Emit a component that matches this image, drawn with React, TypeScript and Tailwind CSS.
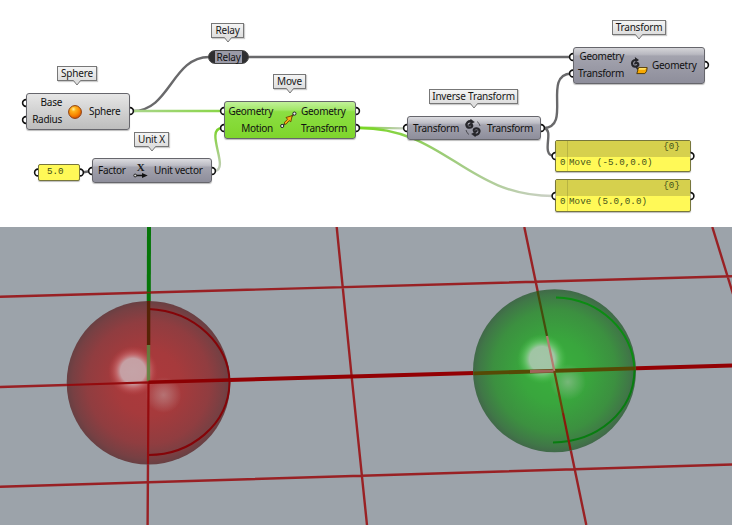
import React from "react";

const FONT = "font-['Noto_Sans','Open_Sans',sans-serif]";

function Tag({ className, children }: { className: string; children: React.ReactNode }) {
  return (
    <div className={`absolute flex h-[15px] items-center justify-center border border-[#777] bg-linear-to-b from-[#f4f4f4] to-[#dedede] text-[10px] tracking-[-0.2px] whitespace-nowrap text-[#161616] shadow-[1px_1px_1px_#0003] ${className}`}>
      <span>{children}</span>
      <svg className="absolute top-[13px] left-1/2 -ml-[5px] h-[6px] w-[10px]" viewBox="0 0 10 6">
        <path d="M1 0 L5 5 L9 0" fill="#dedede" stroke="#777" />
        <path d="M1.7 0H8.3" stroke="#dedede" strokeWidth="1.4" />
      </svg>
    </div>
  );
}

const BOX = "absolute flex items-center rounded-[3px] border border-[#66666c] text-[10px] tracking-[-0.28px] leading-[17px] text-[#111] whitespace-nowrap shadow-[0_1px_1px_#0004]";
const GREY = "bg-[linear-gradient(#dcdce0_0%,#bcbcc4_28%,#a3a3ae_36%,#8e8e9b_100%)]";

function Arrow() {
  return (
    <svg viewBox="0 0 17 18" className="h-[18px] w-[17px]">
      <path d="M2.5 15 L14 3" stroke="#333" strokeWidth="1.2" />
      <path d="M4 11.8 L7.6 8.3 L6 6.5 L12.2 4.6 L10.8 10.8 L9.2 9.6 L5.8 13.4Z" fill="#ffac13" stroke="#6c3c00" strokeWidth=".9" />
      <circle cx="2.2" cy="15" r="1.6" fill="#eee" stroke="#222" />
      <circle cx="14.4" cy="2.6" r="1.6" fill="#eee" stroke="#222" />
    </svg>
  );
}

function Swirl() {
  return (
    <svg viewBox="0 0 18 18" className="h-[18px] w-[18px]" fill="none" stroke="#26262b">
      <path d="M7.5 2.4 C4.2 1.6 1.9 4 2.6 6.6 C3.4 9.6 8.4 9.2 8.2 6.6 C8 4.9 5.4 5.2 5.2 6.8" strokeWidth="2.3" />
      <path d="M6.6 .2 L10.4 3 L6.6 5.2Z" fill="#26262b" strokeWidth=".5" />
      <path d="M10.5 15.6 C13.8 16.4 16.1 14 15.4 11.4 C14.6 8.4 9.6 8.8 9.8 11.4 C10 13.1 12.6 12.8 12.8 11.2" strokeWidth="2.3" />
      <path d="M11.4 17.8 L7.6 15 L11.4 12.8Z" fill="#26262b" strokeWidth=".5" />
      <path d="M2 11 Q2.5 14 5 15.5 M16 7 Q15.5 4 13 2.5" strokeWidth=".7" />
    </svg>
  );
}

function TransformIcon() {
  return (
    <svg viewBox="0 0 18 18" className="h-[18px] w-[18px]">
      <path d="M6 2.8 C2.5 3 1.4 5.5 2.4 8 C3.6 10.8 8.8 9.6 8.3 7 C7.8 5.2 5 5.6 5.2 7.4" fill="none" stroke="#26262b" strokeWidth="2.2" />
      <path d="M4.8 0 L9 3 L5.5 5.4Z" fill="#26262b" />
      <path d="M6 9.5 L8 12.5" stroke="#26262b" strokeWidth="1.5" />
      <path d="M6.8 16.6 L8.6 10.6 H17.2 L16.6 14.2 L14.8 16.6Z" fill="#f7a800" stroke="#4a3300" strokeWidth=".9" />
      <path d="M8.3 12.8 L9.3 11.1 H16.4 L15 12.8Z" fill="#ffe066" />
    </svg>
  );
}

function UnitIcon() {
  return (
    <svg viewBox="0 0 15 18" className="h-[18px] w-[15px]">
      <text x="7.5" y="8.5" textAnchor="middle" className="font-['Liberation_Serif',serif] text-[11px] font-bold" fill="#1c1c20">X</text>
      <path d="M3 13.5H11" stroke="#111" strokeWidth="1.5" />
      <path d="M9 11 L14.7 13.5 L9 16Z" fill="#111" />
      <circle cx="2.2" cy="13.5" r="1.4" fill="#ddd" stroke="#222" />
    </svg>
  );
}

function Panel({ className, row, value }: { className: string; row: string; value: string }) {
  return (
    <div className={`absolute flex w-[136px] flex-col overflow-hidden rounded-[2px] border border-[#77763c] bg-[#fff957] font-['Liberation_Mono',monospace] text-[9.2px] tracking-[0.06px] text-[#44521a] shadow-[0_1px_1px_#0004] ${className}`}>
      <div className="flex h-4 shrink-0 justify-end bg-[#d6d04d] pr-[10px] leading-[12px]">{"{0}"}</div>
      <div className={`flex flex-1 items-start ${row}`}><span className="w-[13px] pl-[4px]">0</span><span>{value}</span></div>
      <div className="absolute top-0 left-[11px] h-full w-px bg-[#0002]" />
    </div>
  );
}

const GRIPS_LEFT = [[26, 103], [26, 120], [38, 172.5], [92, 171], [224, 111], [224, 128], [407, 128], [573, 57], [573, 73.5], [555.5, 156], [555.5, 196]];
const GRIPS_RIGHT = [[130, 111], [80, 172.5], [212, 171], [356, 111], [356, 128], [541, 128], [705, 65], [690.5, 156], [690.5, 196]];

function Wires() {
  return (
    <svg className="absolute inset-0 h-[227px] w-[732px]" viewBox="0 0 732 227" fill="none">
      <defs>
        <linearGradient id="wa" gradientUnits="userSpaceOnUse" x1="134" y1="0" x2="221" y2="0"><stop stopColor="#a9d58a" /><stop offset="1" stopColor="#8ad648" /></linearGradient>
        <linearGradient id="wb" gradientUnits="userSpaceOnUse" x1="0" y1="171" x2="0" y2="128"><stop stopColor="#c6cec0" /><stop offset="1" stopColor="#7bd22c" /></linearGradient>
        <linearGradient id="wc" gradientUnits="userSpaceOnUse" x1="359" y1="0" x2="552" y2="0"><stop stopColor="#78d820" /><stop offset=".45" stopColor="#9dcc79" /><stop offset="1" stopColor="#cbd0c6" /></linearGradient>
        <linearGradient id="wd" gradientUnits="userSpaceOnUse" x1="359" y1="0" x2="404" y2="0"><stop stopColor="#7bd22c" /><stop offset="1" stopColor="#c6cec0" /></linearGradient>
      </defs>
      <g strokeWidth="2.4">
        <path d="M133 111 C170 111 172 57 209 57" stroke="#69696b" />
        <path d="M133 111 H221" stroke="url(#wa)" />
        <path d="M215 171 C230 169 204 129 222 128" stroke="url(#wb)" />
        <path d="M247 57 H571" stroke="#69696b" />
        <path d="M359 127.6 L404 128.4" stroke="url(#wd)" />
        <path d="M359 128 C445 128 466 196 553 196" stroke="url(#wc)" />
        <path d="M544 128 C572 127 542 75 571 73.5" stroke="#69696b" />
        <path d="M544 128 C555 130 540 155 554 156" stroke="#69696b" />
        <path d="M82 172.5 L91 171" stroke="#69696b" />
      </g>
    </svg>
  );
}

function Grips() {
  return (
    <svg className="absolute inset-0 h-[227px] w-[732px]" viewBox="0 0 732 227" fill="#fff" stroke="#111" strokeWidth="1.6">
      {GRIPS_LEFT.map(([x, y]) => <path key={`${x}-${y}`} d={`M${x} ${y - 3.4} A3.4 3.4 0 0 0 ${x} ${y + 3.4}`} />)}
      {GRIPS_RIGHT.map(([x, y]) => <path key={`${x}-${y}`} d={`M${x} ${y - 3.4} A3.4 3.4 0 0 1 ${x} ${y + 3.4}`} />)}
    </svg>
  );
}

function Graph() {
  return (
    <div className={`relative h-[227px] w-[732px] bg-white ${FONT}`}>
      <Wires />
      <Tag className="top-[66px] left-[57px] w-[40px]">Sphere</Tag>
      <Tag className="top-[132px] left-[134px] w-[35px]">Unit X</Tag>
      <Tag className="top-[23px] left-[211px] w-[33px]">Relay</Tag>
      <Tag className="top-[74px] left-[273px] w-[33px]">Move</Tag>
      <Tag className="top-[89px] left-[429px] w-[89px]">Inverse Transform</Tag>
      <Tag className="top-[20px] left-[612px] w-[54px]">Transform</Tag>

      <div className={`${BOX} top-[93px] left-[26px] h-[37px] w-[104px] bg-linear-to-b from-[#e6e6e6] to-[#bdbdbd]`}>
        <div className="flex w-[35px] flex-col items-end pb-px"><span>Base</span><span>Radius</span></div>
        <svg viewBox="0 0 16 16" className="ml-[5px] h-4 w-4">
          <defs><radialGradient id="orb" cx=".38" cy=".28" r=".75"><stop stopColor="#fff0a0" /><stop offset=".25" stopColor="#ffb31c" /><stop offset=".65" stopColor="#f88600" /><stop offset="1" stopColor="#d94d00" /></radialGradient></defs>
          <circle cx="8" cy="8" r="6.4" fill="url(#orb)" stroke="#8c3f10" />
        </svg>
        <span className="ml-[6px]">Sphere</span>
      </div>

      <div className={`${BOX} ${GREY} top-[158px] left-[92px] h-[25px] w-[120px]`}>
        <span className="ml-[5px] w-[35px]">Factor</span><UnitIcon /><span className="ml-[6px]">Unit vector</span>
      </div>

      <div className="absolute top-[164px] left-[38px] flex h-[17px] w-[42px] items-center rounded-[2px] border border-[#77763c] bg-[#fff957] pb-[2px] pl-[8px] font-['Liberation_Mono',monospace] text-[9.2px] text-[#3c4a14] shadow-[0_1px_1px_#0004]">5.0</div>

      <div className="absolute top-[50px] left-[208px] flex h-[14px] w-[41px] items-center justify-center rounded-[7px] border border-[#444] bg-[linear-gradient(90deg,#2e2e30_0_6px,#9a9aa7_6px_33px,#2e2e30_33px)] text-[10px] tracking-[-0.2px] text-[#111]">Relay</div>

      <div className={`${BOX} top-[101px] left-[224px] h-[38px] w-[132px] bg-[linear-gradient(#c2f19a_0%,#a2e768_22%,#8bdf42_27%,#7fd52c_100%)]`}>
        <div className="flex w-[48px] flex-col items-end pb-px"><span>Geometry</span><span>Motion</span></div>
        <div className="ml-[7px]"><Arrow /></div>
        <div className="ml-[4px] flex flex-col pb-px"><span>Geometry</span><span>Transform</span></div>
      </div>

      <div className={`${BOX} ${GREY} top-[116px] left-[407px] h-[24px] w-[134px]`}>
        <span className="ml-[5px] w-[51px]">Transform</span><Swirl /><span className="ml-[5px]">Transform</span>
      </div>

      <div className={`${BOX} top-[47px] left-[573px] h-[37px] w-[132px] bg-[linear-gradient(#d4d4d8_0%,#b9b9c1_18%,#a3a3ae_23%,#8e8e9b_100%)]`}>
        <div className="flex w-[50px] flex-col items-end pb-px"><span>Geometry</span><span>Transform</span></div>
        <div className="ml-[6px]"><TransformIcon /></div>
        <span className="ml-[4px]">Geometry</span>
      </div>

      <Panel className="top-[140px] left-[555px] h-[32px]" row="leading-[12px]" value="Move (-5.0,0.0)" />
      <Panel className="top-[179px] left-[555px] h-[33px]" row="leading-[12px]" value="Move (5.0,0.0)" />
      <Grips />
    </div>
  );
}

function Scene() {
  return (
    <svg viewBox="0 227 732 298" className="block h-[298px] w-[732px] bg-[#9ca3aa]" fill="none">
      <defs>
        <radialGradient id="red"><stop stopColor="#ad393c" /><stop offset=".4" stopColor="#a63a3c" /><stop offset=".75" stopColor="#903d40" /><stop offset=".93" stopColor="#774043" /><stop offset="1" stopColor="#684043" /></radialGradient>
        <radialGradient id="green"><stop stopColor="#39b03d" /><stop offset=".4" stopColor="#39a63d" /><stop offset=".75" stopColor="#3c9040" /><stop offset=".93" stopColor="#407747" /><stop offset="1" stopColor="#416949" /></radialGradient>
        <radialGradient id="redGlow"><stop stopColor="#c5a3a7" /><stop offset=".5" stopColor="#c5a0a4" /><stop offset=".66" stopColor="#c56e71" stopOpacity=".85" /><stop offset="1" stopColor="#b83d40" stopOpacity="0" /></radialGradient>
        <radialGradient id="greenGlow"><stop stopColor="#a3c5a7" /><stop offset=".5" stopColor="#a0c5a4" /><stop offset=".66" stopColor="#6ec571" stopOpacity=".85" /><stop offset="1" stopColor="#3db840" stopOpacity="0" /></radialGradient>
        <radialGradient id="soft"><stop stopColor="#c0a0a0" stopOpacity=".55" /><stop offset=".4" stopColor="#c0a0a0" stopOpacity=".35" /><stop offset="1" stopColor="#c0a0a0" stopOpacity="0" /></radialGradient>
        <radialGradient id="softGreen"><stop stopColor="#9fc0a0" stopOpacity=".6" /><stop offset=".4" stopColor="#9fc0a0" stopOpacity=".35" /><stop offset="1" stopColor="#9fc0a0" stopOpacity="0" /></radialGradient>
      </defs>
      <g stroke="#990a0d" strokeWidth="2.4" opacity=".85">
        <path d="M0 296.7 L732 276.3 M0 486.7 L732 464.5 M336.7 227 L351.7 377 L367 525 M524.3 227 L554.3 371 L586.3 525 M712.3 227 L733 294" />
        <path d="M0 387 L148.5 382.5 L147.6 525" />
      </g>
      <path d="M148.5 382.3 L732 365.6" stroke="#930003" strokeWidth="4" />
      <path d="M149 227 L148.5 382" stroke="#057508" strokeWidth="4" />
      <path d="M147 292.5 H151" stroke="#7a2a10" strokeWidth="1.5" />
      <circle cx="148.5" cy="382.7" r="81.8" fill="url(#red)" />
      <circle cx="133" cy="371" r="25" fill="url(#redGlow)" />
      <circle cx="163.5" cy="395" r="18" fill="url(#soft)" />
      <path d="M148.5 309 C196 311 229 346 229.5 382 C229 425 190 455 148.5 455" stroke="#850408" strokeWidth="2" />
      <path d="M148.6 301 V345" stroke="#562306" strokeWidth="3.4" />
      <path d="M148.5 345 V382" stroke="#59863c" strokeWidth="3.4" opacity=".85" />
      <path d="M67 385 L148.5 382.5 L148 464" stroke="#940b0e" strokeWidth="2.2" />
      <path d="M148.5 382.3 L230 380" stroke="#8b0003" strokeWidth="3.6" />
      <circle cx="554.5" cy="370.8" r="81.5" fill="url(#green)" />
      <circle cx="542" cy="359" r="25" fill="url(#greenGlow)" />
      <circle cx="568" cy="382" r="18" fill="url(#softGreen)" />
      <path d="M556 297.5 C601 299 633 332 634.5 370" stroke="#0b8c12" strokeWidth="2" />
      <path d="M634.5 370 C634 412 597 442 553 442.5" stroke="#087d10" strokeWidth="2" />
      <path d="M473.5 373.3 L635.5 368.4" stroke="#564a05" strokeWidth="3.8" />
      <path d="M537.5 291 L547 336" stroke="#464c0d" strokeWidth="2.2" />
      <path d="M547 336 L554.3 371" stroke="#b57c70" strokeWidth="2.2" />
      <path d="M530 371.6 L554 370.9" stroke="#a0645a" strokeWidth="3" />
      <path d="M554.3 371 L563 413" stroke="#6b430a" strokeWidth="2.2" />
      <path d="M563 413 L570.6 450" stroke="#891a0c" strokeWidth="2.2" />
    </svg>
  );
}

export default function App() {
  return (
    <main className="flex h-[525px] w-[733px] flex-col overflow-hidden bg-white">
      <Graph />
      <Scene />
    </main>
  );
}
